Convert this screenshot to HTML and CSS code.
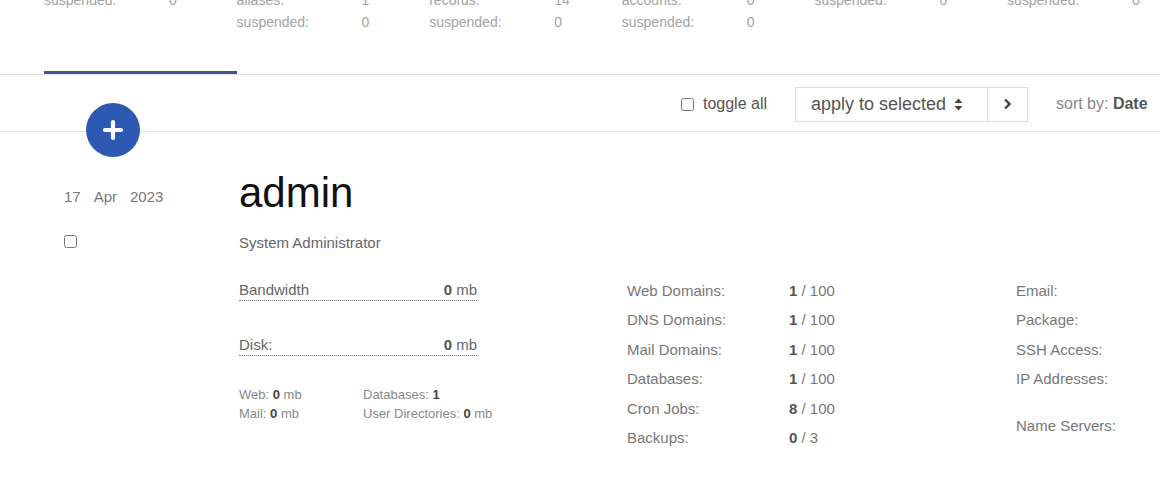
FILE: index.html
```html
<!DOCTYPE html>
<html lang="en">
<head>
    <meta charset="UTF-8">
    <meta name="viewport" content="width=device-width, initial-scale=1.0">
    <title>Users</title>
    <link rel="stylesheet" href="styles.css">
</head>
<body>
    <!-- Resumen superior -->
    <div class="summary">
        <div class="stat-col active">
            <div class="stat"><span>suspended:</span><span>0</span></div>
        </div>
        <div class="stat-col">
            <div class="stat"><span>aliases:</span><span>1</span></div>
            <div class="stat"><span>suspended:</span><span>0</span></div>
        </div>
        <div class="stat-col">
            <div class="stat"><span>records:</span><span>14</span></div>
            <div class="stat"><span>suspended:</span><span>0</span></div>
        </div>
        <div class="stat-col">
            <div class="stat"><span>accounts:</span><span>0</span></div>
            <div class="stat"><span>suspended:</span><span>0</span></div>
        </div>
        <div class="stat-col">
            <div class="stat"><span>suspended:</span><span>0</span></div>
        </div>
        <div class="stat-col">
            <div class="stat"><span>suspended:</span><span>0</span></div>
        </div>
    </div>

    <!-- Barra de acciones -->
    <div class="toolbar">
        <label class="toggle"><input type="checkbox"> toggle all</label>
        <div class="bulk">
            <div class="bulk-select">apply to selected
                <svg class="updown" width="9" height="13" viewBox="0 0 9 13"><path d="M4.5 0.5 L8.5 5 H0.5 Z M4.5 12.5 L8.5 8 H0.5 Z" fill="#444"/></svg>
            </div>
            <button class="bulk-go">
                <svg width="9" height="12" viewBox="0 0 9 12"><path d="M2 1.5 L6.5 6 L2 10.5" fill="none" stroke="#444" stroke-width="2.4"/></svg>
            </button>
        </div>
        <div class="sort">sort by: <b>Date</b></div>
        <a class="add-btn" href="#">
            <svg width="22" height="22" viewBox="0 0 22 22"><path d="M11 3 V19 M3 11 H19" stroke="#fff" stroke-width="4.2" stroke-linecap="round"/></svg>
        </a>
    </div>

    <!-- Usuario -->
    <div class="user-row">
        <div class="user-side">
            <div class="date"><span>17</span><span>Apr</span><span>2023</span></div>
            <input type="checkbox" class="row-check">
        </div>
        <div class="user-main">
            <h1>admin</h1>
            <p class="fullname">System Administrator</p>
            <div class="details">
                <div class="usage">
                    <div class="meter"><span>Bandwidth</span><span><b>0</b> mb</span></div>
                    <div class="meter disk"><span>Disk:</span><span><b>0</b> mb</span></div>
                    <div class="small-stats">
                        <div>Web: <b>0</b> mb</div>
                        <div>Databases: <b>1</b></div>
                        <div>Mail: <b>0</b> mb</div>
                        <div>User Directories: <b>0</b> mb</div>
                    </div>
                </div>
                <div class="limits">
                    <span>Web Domains:</span><span><b>1</b> / 100</span>
                    <span>DNS Domains:</span><span><b>1</b> / 100</span>
                    <span>Mail Domains:</span><span><b>1</b> / 100</span>
                    <span>Databases:</span><span><b>1</b> / 100</span>
                    <span>Cron Jobs:</span><span><b>8</b> / 100</span>
                    <span>Backups:</span><span><b>0</b> / 3</span>
                </div>
                <div class="info">
                    <div>Email:</div>
                    <div>Package:</div>
                    <div>SSH Access:</div>
                    <div>IP Addresses:</div>
                    <div class="ns">Name Servers:</div>
                </div>
            </div>
        </div>
    </div>
</body>
</html>
```

FILE: styles.css
```css
body {
    font-family: "Liberation Sans", Arial, sans-serif;
    margin: 0;
    padding: 0;
    background-color: #fff;
    color: #777;
    overflow: hidden;
}
b {
    color: #555;
}
.summary {
    display: flex;
    margin-top: -11px;
    padding-left: 44px;
    height: 86px;
    border-bottom: 1px solid #e2e2e2;
    box-sizing: border-box;
}
.stat-col {
    width: 192.6px;
    flex: none;
    box-sizing: border-box;
}
.stat-col.active {
    border-bottom: 3px solid #3a5590;
}
.stat {
    display: flex;
    font-size: 14px;
    line-height: 22px;
    color: #a3a3a3;
}
.stat span:first-child {
    width: 125px;
}
.toolbar {
    position: relative;
    display: flex;
    align-items: center;
    justify-content: flex-end;
    height: 57px;
    padding-top: 2px;
    border-bottom: 1px solid #e2e2e2;
    box-sizing: border-box;
}
.toggle {
    display: flex;
    align-items: center;
    font-size: 16px;
    color: #555;
    margin-right: 28px;
}
.toggle input {
    margin: 0 9px 0 0;
    width: 13px;
    height: 13px;
}
.bulk {
    display: flex;
    height: 35px;
    border: 1px solid #dcdcdc;
    box-sizing: border-box;
    margin-right: 28px;
}
.bulk-select {
    width: 192px;
    box-sizing: border-box;
    padding: 0 0 0 15px;
    font-size: 18px;
    line-height: 33px;
    color: #555;
    border-right: 1px solid #dcdcdc;
}
.updown {
    margin-left: 3px;
    vertical-align: -1px;
}
.bulk-go {
    width: 39px;
    border: none;
    background: #fff;
    padding: 0;
    display: flex;
    align-items: center;
    justify-content: center;
}
.sort {
    width: 104px;
    font-size: 16px;
    color: #888;
    white-space: nowrap;
}
.add-btn {
    position: absolute;
    left: 86px;
    top: 28px;
    width: 54px;
    height: 54px;
    border-radius: 50%;
    background-color: #2e59b3;
    display: flex;
    align-items: center;
    justify-content: center;
}
.user-row {
    display: flex;
    padding: 40px 0 0 64px;
}
.user-side {
    width: 175px;
    padding-top: 15px;
}
.date {
    display: flex;
    gap: 13px;
    font-size: 15px;
    line-height: 20px;
}
.row-check {
    display: block;
    margin: 28px 0 0 0;
    width: 13px;
    height: 13px;
}
.user-main {
    flex: 1;
}
h1 {
    margin: 0;
    font-size: 42px;
    line-height: 42px;
    font-weight: normal;
    color: #111;
}
.fullname {
    margin: 19px 0 0;
    font-size: 15px;
    line-height: 20px;
    color: #666;
}
.details {
    display: grid;
    grid-template-columns: 388px 389px 1fr;
    margin-top: 23px;
}
.usage {
    width: 238px;
    padding-top: 4px;
}
.meter {
    display: flex;
    justify-content: space-between;
    font-size: 15px;
    line-height: 20px;
    color: #666;
    border-bottom: 1px dotted #777;
}
.meter.disk {
    margin-top: 34px;
}
.small-stats {
    display: grid;
    grid-template-columns: 124px 1fr;
    margin-top: 29px;
    font-size: 13px;
    line-height: 19px;
    color: #888;
    white-space: nowrap;
}
.small-stats b {
    color: #444;
}
.limits {
    display: grid;
    grid-template-columns: 162px 1fr;
    font-size: 15px;
    line-height: 29.4px;
}
.info {
    font-size: 15px;
    line-height: 29.4px;
}
.info .ns {
    margin-top: 17px;
}
```
